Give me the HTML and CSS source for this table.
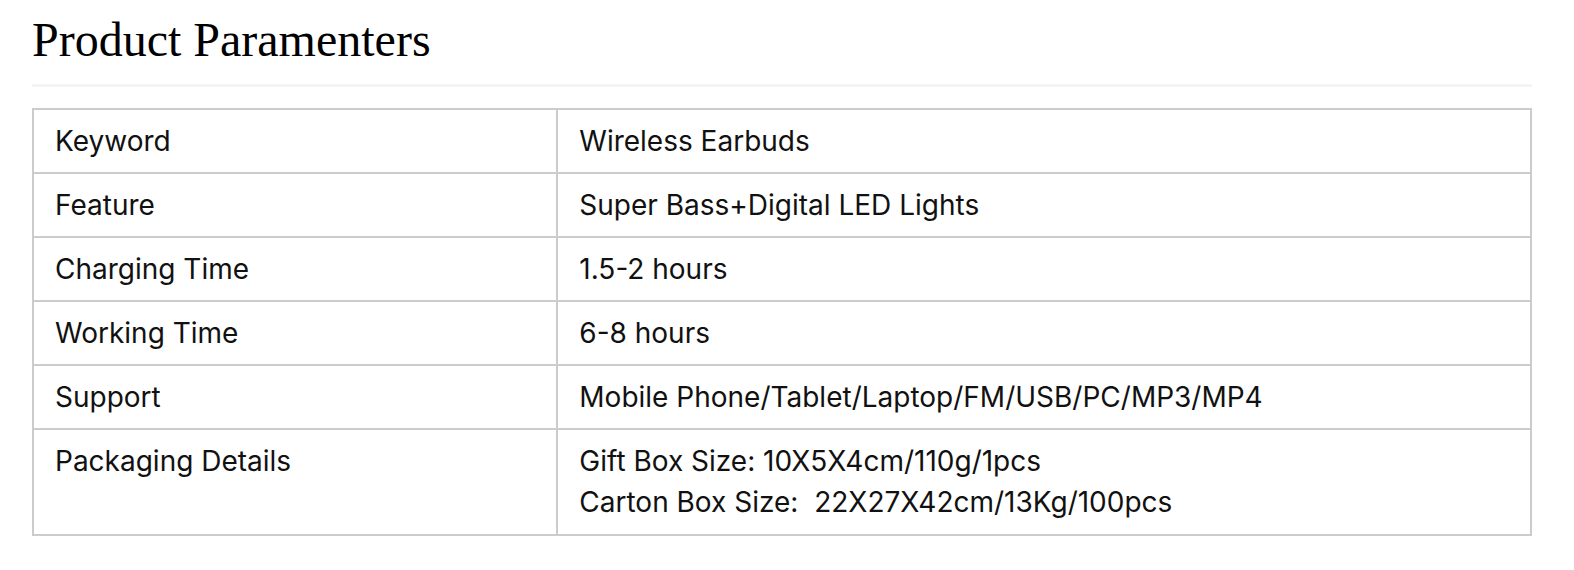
FILE: index.html
```html
<!DOCTYPE html>
<html>
<head>
<meta charset="utf-8">
<link rel="stylesheet" href="styles.css">
</head>
<body>
<div class="page">
  <h2 class="title">Product Paramenters</h2>
  <div class="rule"></div>
  <table class="params">
    <tr><td class="key">Keyword</td><td class="val">Wireless Earbuds</td></tr>
    <tr><td class="key">Feature</td><td class="val">Super Bass+Digital LED Lights</td></tr>
    <tr><td class="key">Charging Time</td><td class="val">1.5-2 hours</td></tr>
    <tr><td class="key">Working Time</td><td class="val">6-8 hours</td></tr>
    <tr><td class="key">Support</td><td class="val">Mobile Phone/Tablet/Laptop/FM/USB/PC/MP3/MP4</td></tr>
    <tr><td class="key">Packaging Details</td><td class="val multi">Gift Box Size: 10X5X4cm/110g/1pcs<br>Carton Box Size:&nbsp; 22X27X42cm/13Kg/100pcs</td></tr>
  </table>
</div>
</body>
</html>
```

FILE: styles.css
```css
html, body {
  margin: 0;
  padding: 0;
  background: #ffffff;
}
.page {
  padding: 12px 42px 0 32px;
  width: 1500px;
}
.title {
  margin: 0;
  font-family: "Liberation Serif", "Times New Roman", serif;
  font-weight: normal;
  font-size: 48px;
  line-height: 56px;
  color: #000;
}
.rule {
  margin-top: 16px;
  height: 3px;
  background: #f4f4f4;
}
.params {
  margin-top: 21px;
  width: 1500px;
  border-collapse: collapse;
  font-family: Inter, "Liberation Sans", sans-serif;
  font-size: 28px;
  line-height: 40px;
  color: #111;
}
.params td {
  border: 2px solid #cccccc;
  padding: 11px 20px 11px 21px;
  vertical-align: top;
}
.params .multi {
  line-height: 41px;
}
.key {
  width: 35%;
  box-sizing: border-box;
}
```
